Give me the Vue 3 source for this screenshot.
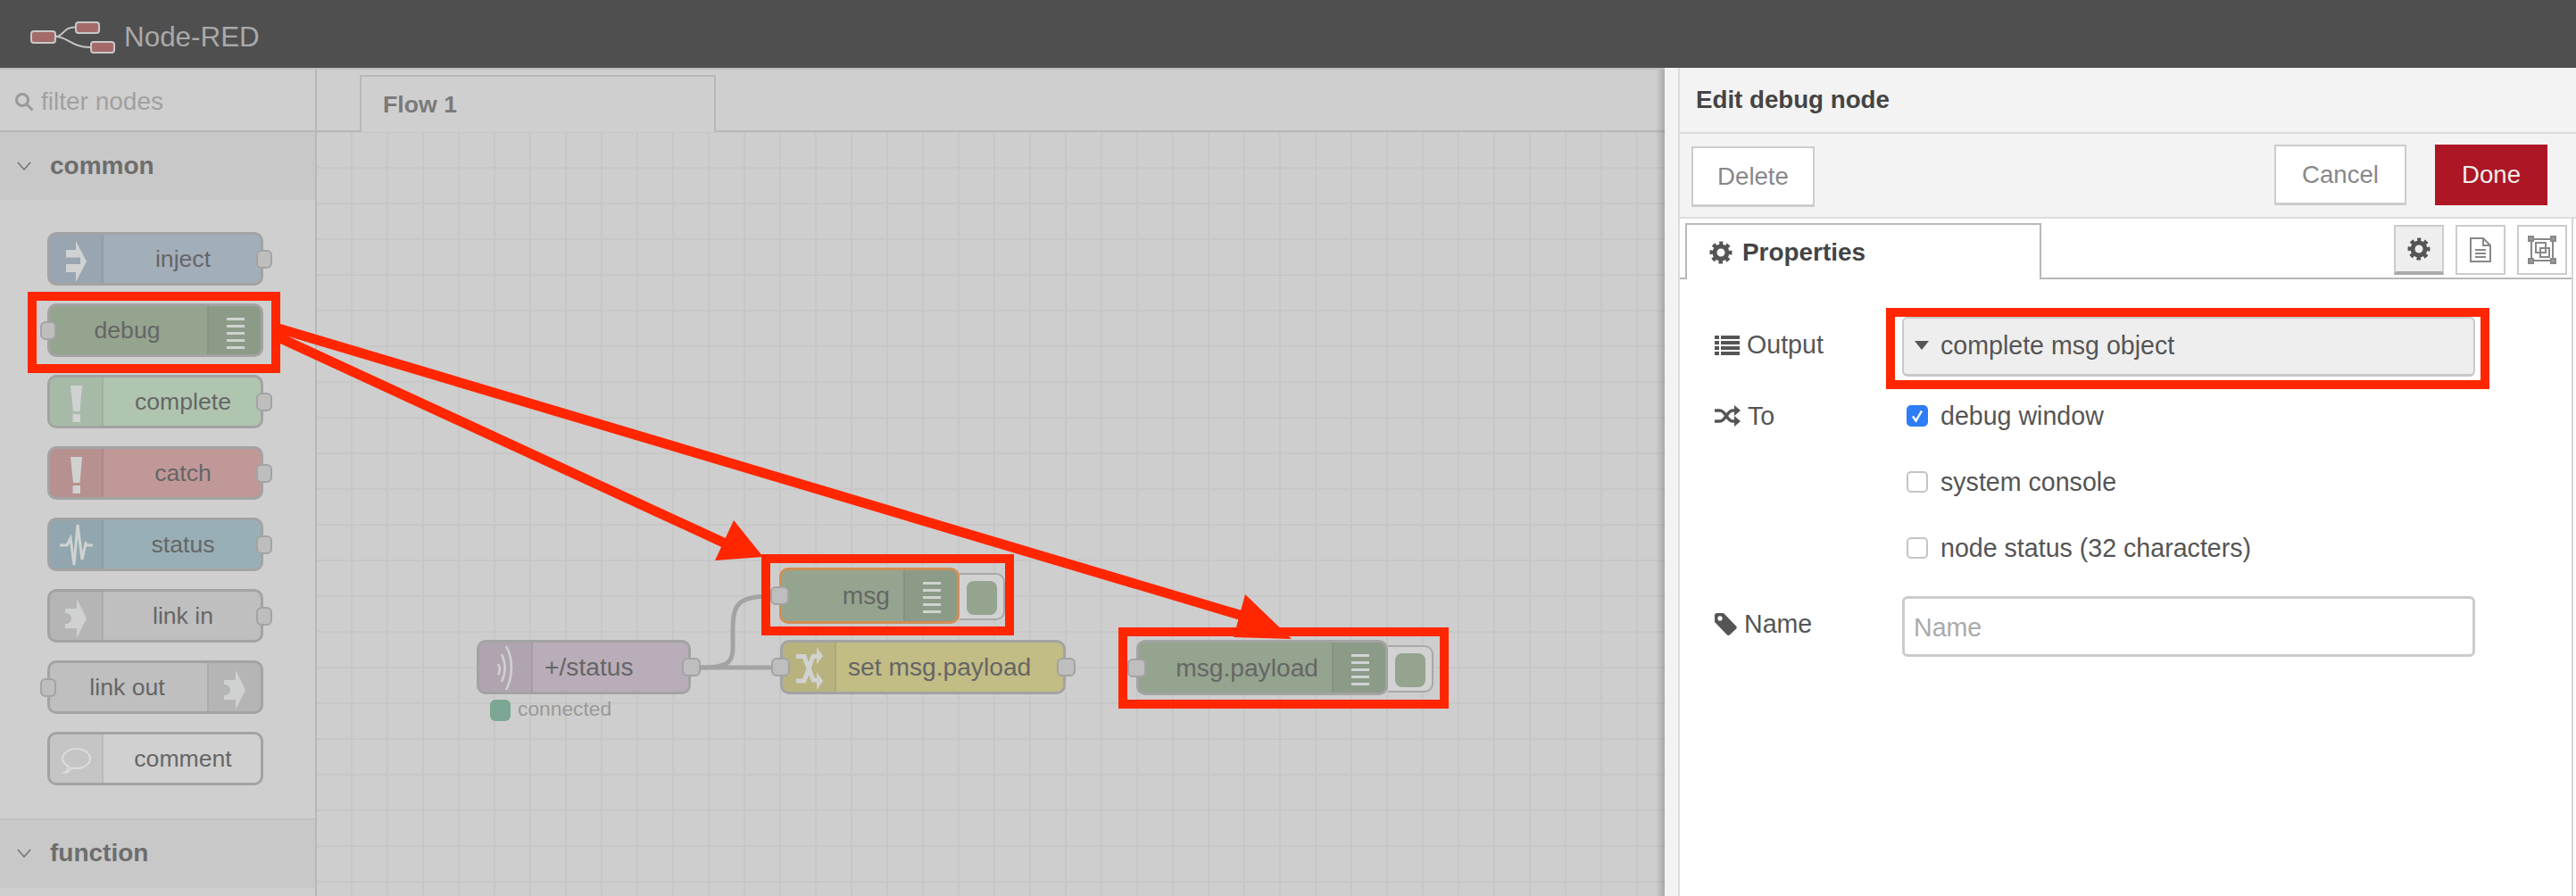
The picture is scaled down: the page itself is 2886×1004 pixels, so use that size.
<template>
  <div class="app">
    <header class="topbar">
      <svg class="logo" width="130" height="62" viewBox="0 0 130 62">
        <path d="M62 41C72 41 70 30.5 84 30.5M62 41C76 41 80 53 101 53" fill="none" stroke="#c4c4c4" stroke-width="2" />
        <rect x="35" y="35" width="27" height="13" rx="3" />
        <rect x="85" y="25" width="26" height="12" rx="3" />
        <rect x="102" y="47" width="26" height="12" rx="3" />
      </svg>
      <span class="brand">Node-RED</span>
    </header>

    <main class="main">
      <aside class="palette">
        <div class="filter">
          <svg width="24" height="24" viewBox="0 0 24 24" fill="none" stroke="#9a9a9a" stroke-width="3">
            <circle cx="10" cy="10" r="6.5" />
            <path d="M15 15l6.5 6.5" />
          </svg>
          <span>filter nodes</span>
        </div>
        <div class="category">
          <svg width="16" height="10" viewBox="0 0 16 10" fill="none" stroke="#777" stroke-width="1.6"><path d="M1 1l7 8 7-8" /></svg>
          <span>common</span>
        </div>
        <div class="palette-nodes">
          <div
            v-for="n in paletteNodes"
            :key="n.label"
            class="node palette-node"
            :class="{ 'icon-right': n.side === 'right' }"
            :style="{ background: n.color }"
          >
            <div v-if="n.side === 'left'" class="icon-box">
              <svg width="60" height="56" viewBox="0 0 60 56">
                <path v-for="(p, i) in icons[n.icon]" :key="i" :d="p.d" :fill="p.fill || 'none'" :stroke="p.stroke || 'none'" :stroke-width="p.w || 0" />
              </svg>
            </div>
            <span class="label">{{ n.label }}</span>
            <div v-if="n.side === 'right'" class="icon-box right">
              <svg width="60" height="56" viewBox="0 0 60 56">
                <path v-for="(p, i) in icons[n.icon]" :key="i" :d="p.d" :fill="p.fill || 'none'" :stroke="p.stroke || 'none'" :stroke-width="p.w || 0" />
              </svg>
            </div>
            <span v-if="n.side === 'right'" class="port port-in"></span>
            <span v-if="n.side === 'left' && n.icon !== 'comment'" class="port port-out"></span>
          </div>
        </div>
        <div class="category category-next">
          <svg width="16" height="10" viewBox="0 0 16 10" fill="none" stroke="#777" stroke-width="1.6"><path d="M1 1l7 8 7-8" /></svg>
          <span>function</span>
        </div>
      </aside>

      <section class="editor">
        <div class="tabs">
          <div class="tab">Flow 1</div>
        </div>
        <div class="workspace">
          <svg class="wires" width="1510" height="856">
            <path d="M430 600H509" />
            <path d="M430 600C470 600 466 590 466 560C466 530 470 520 509 520" />
          </svg>
          <div
            v-for="n in flowNodes"
            :key="n.label"
            class="node flow-node"
            :class="{ selected: n.selected, 'text-right': n.side === 'right' }"
            :style="{ left: n.x + 'px', top: n.y + 'px', width: n.w + 'px', height: n.h + 'px', background: n.color }"
          >
            <div v-if="n.side === 'left'" class="icon-box">
              <svg width="60" height="57" viewBox="0 0 60 57">
                <path v-for="(p, i) in icons[n.icon]" :key="i" :d="p.d" :fill="p.fill || 'none'" :stroke="p.stroke || 'none'" :stroke-width="p.w || 0" />
              </svg>
            </div>
            <span class="label">{{ n.label }}</span>
            <div v-if="n.side === 'right'" class="icon-box right">
              <svg width="60" height="57" viewBox="0 0 60 57">
                <path v-for="(p, i) in icons[n.icon]" :key="i" :d="p.d" :fill="p.fill || 'none'" :stroke="p.stroke || 'none'" :stroke-width="p.w || 0" />
              </svg>
            </div>
            <span v-if="n.portIn" class="port port-in"></span>
            <span v-if="n.portOut" class="port port-out"></span>
            <div v-if="n.side === 'right'" class="debug-toggle"><span></span></div>
            <div v-if="n.status" class="status">
              <span class="status-dot"></span>
              <span>{{ n.status }}</span>
            </div>
          </div>
        </div>
      </section>
    </main>

    <aside class="tray">
      <div class="tray-handle"></div>
      <div class="tray-body">
        <div class="tray-title">Edit debug node</div>
        <div class="tray-actions">
          <button class="btn btn-delete">Delete</button>
          <button class="btn btn-cancel">Cancel</button>
          <button class="btn btn-done">Done</button>
        </div>
        <div class="tray-content">
          <div class="tray-tabs">
            <div class="tray-tab">
              <svg width="26" height="26" viewBox="-13 -13 26 26" fill="none" stroke="#555">
                <circle r="7" stroke-width="5" />
                <circle r="10.5" stroke-width="4" stroke-dasharray="4.5 3.75" stroke-dashoffset="2.25" transform="rotate(-90)" />
              </svg>
              <span>Properties</span>
            </div>
            <div class="tray-icons">
              <div class="icon-btn active">
                <svg width="26" height="26" viewBox="-13 -13 26 26" fill="none" stroke="#555">
                  <circle r="7" stroke-width="5" />
                  <circle r="10.5" stroke-width="4" stroke-dasharray="4.5 3.75" stroke-dashoffset="2.25" transform="rotate(-90)" />
                </svg>
              </div>
              <div class="icon-btn">
                <svg width="26" height="30" viewBox="0 0 26 30" fill="none" stroke="#888" stroke-width="2">
                  <path d="M2 2H16L24 10V28H2Z" />
                  <path d="M16 2V10H24M7 15H19M7 19H19M7 23H19" />
                </svg>
              </div>
              <div class="icon-btn">
                <svg width="34" height="32" viewBox="0 0 34 32" fill="none" stroke="#888" stroke-width="2">
                  <path d="M5 4H29V28H5Z" />
                  <path d="M2 1h5v5H2zM27 1h5v5h-5zM2 26h5v5H2zM27 26h5v5h-5z" fill="#999" />
                  <path d="M10 8H21V19H10ZM15 14H25V24H15Z" />
                </svg>
              </div>
            </div>
          </div>

          <div class="form">
            <div class="form-row">
              <label class="form-label output-label">
                <svg width="28" height="22" viewBox="0 0 28 22" fill="#555">
                  <path d="M0 0h5v4H0zM7 0h21v4H7zM0 6h5v4H0zM7 6h21v4H7zM0 12h5v4H0zM7 12h21v4H7zM0 18h5v4H0zM7 18h21v4H7z" />
                </svg>
                <span>Output</span>
              </label>
              <div class="select">
                <span class="caret"></span>
                <span>complete msg object</span>
              </div>
            </div>

            <div class="form-row to-row">
              <label class="form-label">
                <svg width="29" height="24" viewBox="0 0 29 24" fill="none" stroke="#555" stroke-width="3.5">
                  <path d="M0 6H6C12 6 14 18 20 18H25M0 18H6C12 18 14 6 20 6H25" />
                  <path d="M22 0l7 6-7 6zM22 12l7 6-7 6z" fill="#555" stroke="none" />
                </svg>
                <span>To</span>
              </label>
              <div class="checks">
                <div v-for="c in targets" :key="c.label" class="check-row">
                  <span class="check" :class="{ on: c.on }">
                    <svg v-if="c.on" width="16" height="16" viewBox="0 0 16 16" fill="none" stroke="#fff" stroke-width="2.4"><path d="M3 8.5l3.5 5L13 2.5" /></svg>
                  </span>
                  <span>{{ c.label }}</span>
                </div>
              </div>
            </div>

            <div class="form-row name-row">
              <label class="form-label">
                <svg width="25" height="25" viewBox="0 0 25 25" fill="#555">
                  <path d="M0 2.5C0 1 1 0 2.500 0H10L24 14.500C25 15.500 25 16.800 24 17.800L17 24.200C16 25.200 14.800 25.200 13.800 24.200L0 10ZM6 8.500A2.600 2.600 0 1 0 6 3.300A2.600 2.600 0 1 0 6 8.500Z" fill-rule="evenodd" />
                </svg>
                <span>Name</span>
              </label>
              <input class="name-input" placeholder="Name" />
            </div>
          </div>
        </div>
      </div>
    </aside>

    <!-- red callouts drawn on top of the screenshot -->
    <svg class="callouts" width="2886" height="1004" viewBox="0 0 2886 1004">
      <g fill="none" stroke="#ff2600" stroke-width="10">
        <rect x="36" y="332" width="273" height="81" />
        <rect x="858" y="626" width="273" height="81" />
        <rect x="1258" y="708" width="360" height="81" />
        <rect x="2118" y="350" width="666" height="81" />
      </g>
      <g stroke="#ff2600" stroke-width="11">
        <line x1="312" y1="378" x2="815" y2="610" />
        <line x1="312" y1="368" x2="1392" y2="690" />
      </g>
      <g fill="#ff2600">
        <polygon points="822,583 855,624 801,628" />
        <polygon points="1395,666 1447,716 1382,714" />
      </g>
    </svg>
  </div>
</template>

<script setup>
const white = '#d0d2d2'

const arrowIcon = [{ d: 'M18 17H29V7L41 30L29 53V42H18V33H34V25.500H18Z', fill: white }]
const bangIcon = [{ d: 'M23 9H36L33.500 38H26ZM25.500 41H34V50H25.500Z', fill: white }]
const linkIcon = [{ d: 'M17 19H30V8L41 30L30 52V41H17V36C21 36 24 34 24 30C24 26 21 24 17 24Z', fill: white }]
const barsIcon = [{ d: 'M20 14.500H40M20 22.500H40M20 30.500H40M20 38.500H40M20 46.500H40', stroke: white, w: 3 }]

const icons = {
  arrow: arrowIcon,
  bang: bangIcon,
  link: linkIcon,
  bars: barsIcon,
  pulse: [{ d: 'M11 28H19L23 20L27 50L31 5L36 44L40 26L42 28H48', stroke: white, w: 3 }],
  comment: [{
    d: 'M21 36C16 33 14 30 14 27C14 21 21 16 30 16C38 16 45 21 45 27C45 33 38 38 30 38C28 38 26 38 24 37.500C23 40 20 43 16 43C18 41 21 39 21 36Z',
    stroke: '#dcdcdc',
    w: 2
  }],
  wave: [{
    d: 'M30 4C38 18 38 38 30 53M25 13C30 24 30 34 25 44M21 24C23.500 28 23.500 32 21 36',
    stroke: white,
    w: 2.500
  }],
  shuffle: [
    { d: 'M15 15.500H24L34 42H40M15 43H24L34 15.500H40', stroke: white, w: 5 },
    { d: 'M38 5L45 15L38 24ZM38 33L45 43L38 53Z', fill: white }
  ]
}

const paletteNodes = [
  { label: 'inject', side: 'left', icon: 'arrow', color: '#a2aeba' },
  { label: 'debug', side: 'right', icon: 'bars', color: '#94a48f' },
  { label: 'complete', side: 'left', icon: 'bang', color: '#b0c5b0' },
  { label: 'catch', side: 'left', icon: 'bang', color: '#c19898' },
  { label: 'status', side: 'left', icon: 'pulse', color: '#99afb8' },
  { label: 'link in', side: 'left', icon: 'link', color: '#bfbfbf' },
  { label: 'link out', side: 'right', icon: 'link', color: '#bfbfbf' },
  { label: 'comment', side: 'left', icon: 'comment', color: '#d0d0d0' }
]

// positions are relative to the workspace
const flowNodes = [
  { label: '+/status', side: 'left', icon: 'wave', color: '#b9adb9', x: 179, y: 569, w: 240, h: 61, portOut: true, status: 'connected' },
  { label: 'msg', side: 'right', icon: 'bars', color: '#94a48f', x: 518, y: 488, w: 202, h: 63, portIn: true, selected: true },
  { label: 'set msg.payload', side: 'left', icon: 'shuffle', color: '#c2bc85', x: 519, y: 569, w: 320, h: 61, portIn: true, portOut: true },
  { label: 'msg.payload', side: 'right', icon: 'bars', color: '#94a48f', x: 918, y: 569, w: 282, h: 62, portIn: true }
]

const targets = [
  { label: 'debug window', on: true },
  { label: 'system console', on: false },
  { label: 'node status (32 characters)', on: false }
]
</script>

<style>
html,
body {
  margin: 0;
  background: #fff;
}
</style>

<style scoped>
* {
  box-sizing: border-box;
}

.app {
  position: relative;
  display: flex;
  flex-direction: column;
  width: 2886px;
  height: 1004px;
  overflow: hidden;
  font-family: "Liberation Sans", Arial, sans-serif;
  background: #cfcfcf;
}

.topbar {
  display: flex;
  align-items: flex-start;
  flex: none;
  height: 78px;
  border-bottom: 2px solid #bfbfbf;
  background: #4f4f4f;
}

.logo {
  flex: none;
}

.logo rect {
  fill: #a46a6a;
  stroke: #c8c8c8;
  stroke-width: 2;
}

.brand {
  margin-top: 24px;
  margin-left: 9px;
  font-size: 31.4px;
  line-height: 36px;
  color: #a9a9a9;
}

.main {
  display: flex;
  flex: 1;
  min-height: 0;
}

.palette {
  flex: none;
  width: 355px;
  border-right: 2px solid #b8b8b8;
}

.filter {
  display: flex;
  align-items: center;
  gap: 7px;
  height: 70px;
  padding: 4px 0 0 15px;
  border-bottom: 2px solid #b8b8b8;
  font-size: 28px;
  color: #a0a0a0;
}

.category {
  display: flex;
  align-items: center;
  gap: 21px;
  height: 76px;
  padding-left: 19px;
  background: #c8c8c8;
  font-size: 28px;
  font-weight: bold;
  color: #6d6d6d;
}

.category-next {
  height: 78px;
  padding-bottom: 2px;
  border-top: 2px solid #c2c2c2;
}

.palette-nodes {
  display: flex;
  flex-direction: column;
  gap: 20px;
  padding: 36px 0 37px 53px;
}

.node {
  position: relative;
  display: flex;
  border: 3px solid #a3a3a3;
  border-radius: 10px;
  color: #666;
}

.palette-node {
  width: 242px;
  height: 60px;
  font-size: 26.6px;
}

.palette-node .label {
  padding-left: 2px;
}

.palette-node.icon-right .label {
  padding-right: 3px;
  padding-left: 0;
}

.palette-node .port {
  width: 18px;
}

.palette-node .port-in {
  left: -11px;
}

.palette-node .port-out {
  right: -13px;
}

.icon-box {
  flex: none;
  width: 60px;
  border-right: 2px solid rgba(0, 0, 0, 0.05);
  border-radius: 7px 0 0 7px;
  background: rgba(0, 0, 0, 0.05);
}

.icon-box.right {
  border-right: none;
  border-left: 2px solid rgba(0, 0, 0, 0.05);
  border-radius: 0 7px 7px 0;
}

.icon-box svg {
  display: block;
}

.label {
  flex: 1;
  align-self: center;
  text-align: center;
  white-space: nowrap;
}

.port {
  position: absolute;
  top: 50%;
  width: 21px;
  height: 21px;
  margin-top: -10.500px;
  border: 2px solid #a3a3a3;
  border-radius: 6px;
  background: #bebebe;
}

.port-in {
  left: -13px;
}

.port-out {
  right: -14px;
}

.editor {
  display: flex;
  flex: 1;
  flex-direction: column;
  min-width: 0;
}

.tabs {
  flex: none;
  height: 70px;
  padding: 6px 0 0 48px;
  border-bottom: 2px solid #b8b8b8;
}

.tab {
  display: flex;
  align-items: center;
  width: 399px;
  height: 64px;
  padding-left: 24px;
  border: 2px solid #b8b8b8;
  border-bottom: none;
  background: #cfcfcf;
  font-size: 26.7px;
  font-weight: bold;
  color: #7a7a7a;
}

.workspace {
  position: relative;
  isolation: isolate;
  flex: 1;
  background-color: #cecece;
  background-image:
    linear-gradient(#c7c7c7 2px, transparent 2px),
    linear-gradient(90deg, #c7c7c7 2px, transparent 2px);
  background-position: 38px 39px;
  background-size: 40px 40px;
}

.wires {
  position: absolute;
  top: 0;
  left: 0;
  fill: none;
  stroke: #a3a3a3;
  stroke-width: 5;
}

.flow-node {
  position: absolute;
  font-size: 28.2px;
}

.flow-node .label {
  padding-left: 13px;
  text-align: left;
}

.flow-node.text-right .label {
  padding-right: 15px;
  padding-left: 0;
  text-align: right;
}

.flow-node.selected {
  border-color: #d08f55;
}

.debug-toggle {
  position: absolute;
  top: 3px;
  left: calc(100% + 3px);
  z-index: -1;
  width: 51px;
  height: 53px;
  padding: 7px 0 0 8px;
  border: 2px solid #a8a8a8;
  border-left: none;
  border-radius: 0 10px 10px 0;
  background: #d2d2d2;
}

.debug-toggle span {
  display: block;
  width: 34px;
  height: 38px;
  border-radius: 8px;
  background: #94a48f;
}

.status {
  position: absolute;
  top: 61px;
  left: 12px;
  display: flex;
  align-items: center;
  gap: 8px;
  font-size: 22.8px;
  color: #999;
  white-space: nowrap;
}

.status-dot {
  width: 23px;
  height: 24px;
  margin-top: 2px;
  border-radius: 6px;
  background: #7ba794;
}

.tray {
  position: absolute;
  top: 76px;
  right: 0;
  bottom: 0;
  display: flex;
  width: 1021px;
  background: #fff;
}

.tray::before {
  content: "";
  position: absolute;
  top: 2px;
  bottom: 0;
  left: -10px;
  width: 10px;
  background: linear-gradient(90deg, rgba(0, 0, 0, 0), rgba(0, 0, 0, 0.18));
}

.tray-handle {
  flex: none;
  width: 17px;
  border-right: 2px solid #dcdcdc;
  background: #f3f3f3;
}

.tray-body {
  display: flex;
  flex: 1;
  flex-direction: column;
  min-width: 0;
}

.tray-title {
  display: flex;
  flex: none;
  align-items: center;
  height: 74px;
  padding-left: 18px;
  border-bottom: 2px solid #dcdcdc;
  background: #f3f3f3;
  font-size: 27.7px;
  font-weight: bold;
  color: #444;
}

.tray-actions {
  display: flex;
  flex: none;
  align-items: flex-start;
  height: 95px;
  padding: 12px 32px 0 13px;
  border-bottom: 2px solid #dcdcdc;
  background: #f3f3f3;
}

.btn {
  height: 68px;
  padding: 0;
  border: 2px solid #ccc;
  border-bottom-width: 3px;
  background: #fff;
  font-family: inherit;
  font-size: 27.6px;
  color: #888;
}

.btn-delete {
  width: 138px;
  margin-top: 2px;
  margin-right: auto;
}

.btn-cancel {
  width: 148px;
}

.btn-done {
  width: 126px;
  margin-left: 32px;
  border: none;
  background: #ad1625;
  color: #eee;
}

.tray-content {
  flex: 1;
  margin-right: 3px;
  border-right: 2px solid #d4d4d4;
}

.tray-tabs {
  display: flex;
  justify-content: space-between;
  height: 68px;
  padding: 5px 5px 0 6px;
  border-bottom: 2px solid #b8b8b8;
}

.tray-tab {
  display: flex;
  align-items: center;
  gap: 11px;
  width: 399px;
  height: 63px;
  padding-left: 25px;
  border: 2px solid #b8b8b8;
  border-bottom: none;
  background: #fff;
  font-size: 27.9px;
  font-weight: bold;
  color: #444;
}

.tray-icons {
  display: flex;
  gap: 13px;
  padding-top: 2px;
}

.icon-btn {
  display: flex;
  align-items: center;
  justify-content: center;
  width: 56px;
  height: 56px;
  border: 2px solid #ccc;
}

.icon-btn.active {
  border-bottom: 4px solid #aaa;
  background: #eee;
}

.form {
  padding: 42px 0 0 39px;
  font-size: 28.6px;
  color: #555;
}

.form-row {
  display: flex;
  align-items: center;
}

.form-label {
  display: flex;
  flex: none;
  align-items: center;
  gap: 8px;
  width: 210px;
}

.output-label {
  margin-top: -4px;
}

.select {
  display: flex;
  align-items: center;
  width: 642px;
  height: 67px;
  padding: 0 0 2px 12px;
  border: 2px solid #c9c9c9;
  border-bottom-width: 3px;
  border-radius: 6px;
  background: #eee;
}

.caret {
  width: 0;
  height: 0;
  margin-right: 13px;
  border-top: 10px solid #555;
  border-right: 8px solid transparent;
  border-left: 8px solid transparent;
}

.to-row {
  align-items: flex-start;
  margin-top: 7px;
}

.to-row .form-label {
  height: 74px;
}

.check-row {
  display: flex;
  align-items: center;
  gap: 14px;
  height: 74px;
  padding-left: 5px;
}

.check {
  display: flex;
  align-items: center;
  justify-content: center;
  width: 24px;
  height: 24px;
  border: 2px solid #c4c4c4;
  border-radius: 5px;
  background: #fff;
}

.check.on {
  border-color: #2f7df6;
  background: #2f7df6;
}

.name-row {
  margin-top: 17px;
}

.name-row .form-label {
  margin-top: -5px;
}

.name-input {
  width: 642px;
  height: 68px;
  padding: 2px 10px 0;
  border: 3px solid #ccc;
  border-radius: 6px;
  outline: none;
  font-family: inherit;
  font-size: 28.6px;
}

.name-input::placeholder {
  color: #aaa;
}

.callouts {
  position: absolute;
  top: 0;
  left: 0;
  pointer-events: none;
}
</style>
